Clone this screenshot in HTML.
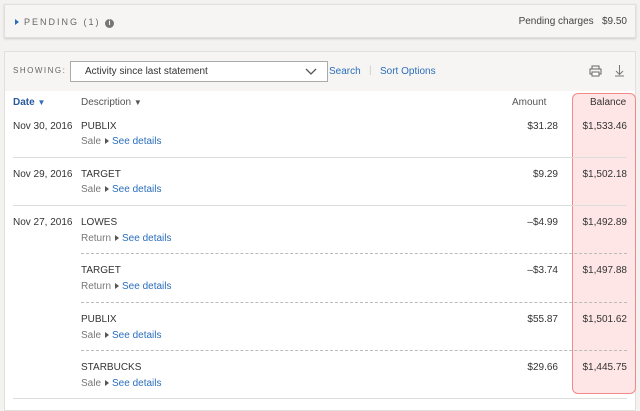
<!DOCTYPE html>
<html><head><style>
*{box-sizing:border-box;margin:0;padding:0}
body{width:640px;height:400px;background:#f3f2f0;font-family:"Liberation Sans",sans-serif;font-size:10px;color:#333;position:relative;overflow:hidden}
.pend{position:absolute;left:4px;top:4px;width:632px;height:34px;background:#f7f5f3;border:1px solid #e2e0dd;box-shadow:0 1px 2px #ccc}
.card{position:absolute;left:4px;top:51px;width:632px;height:360px;background:#fff;border:1px solid #e2e0dd}
.head{height:39px;background:#f7f5f3;position:relative}
.abs{position:absolute;white-space:nowrap}
.blue{color:#2a6ebb}
.hl{position:absolute;left:572px;top:93px;width:64px;height:301px;border:1px solid #f08a8a;border-radius:6px;background:rgba(255,200,200,.45)}
.sub{color:#777}
.tri{display:inline-block;width:0;height:0;border-left:4px solid #555;border-top:3px solid transparent;border-bottom:3px solid transparent;margin:0 3px 0 4px;vertical-align:0}
.line{position:absolute;height:0;border-top:1px solid #ddd}
.dash{position:absolute;height:0;border-top:1px dashed #bbb}
.r{text-align:right}
</style></head><body>
<div class="pend">
<span class="abs" style="left:10px;top:12px;font-size:9px;letter-spacing:2px;color:#666"><span style="display:inline-block;border-left:4px solid #2a6ebb;border-top:3px solid transparent;border-bottom:3px solid transparent;margin-right:5px"></span>PENDING (1) <span style="display:inline-block;width:9px;height:9px;border-radius:50%;background:#777;color:#fff;font-size:7px;text-align:center;line-height:9px;letter-spacing:0;font-weight:bold">i</span></span>
<span class="abs" style="right:8px;top:11px;font-size:10px;color:#444">Pending charges &nbsp; $9.50</span>
</div>
<div class="card">
<div class="head">
<span class="abs" style="left:8px;top:14px;font-size:8px;letter-spacing:1.5px;color:#666">SHOWING:</span>
<div class="abs" style="left:65px;top:9px;width:258px;height:21px;border:1px solid #aaa;background:#fff;padding:4px 0 0 14px;font-size:10px;color:#333">Activity since last statement
<svg style="position:absolute;right:10px;top:6px" width="12" height="8"><path d="M1 1 L6 6 L11 1" fill="none" stroke="#555" stroke-width="1.3"/></svg></div>
<span class="abs blue" style="left:324px;top:14px">Search</span>
<span class="abs" style="left:364px;top:13px;color:#ccc">|</span>
<span class="abs blue" style="left:375px;top:14px">Sort Options</span>
<svg class="abs" style="left:584px;top:13px" width="13" height="12"><rect x="3" y="1" width="7" height="3" fill="none" stroke="#666"/><rect x="1" y="4" width="11" height="5" fill="none" stroke="#666"/><rect x="3" y="7" width="7" height="4" fill="#fff" stroke="#666"/></svg>
<svg class="abs" style="left:609px;top:12px" width="11" height="13"><path d="M5.5 1 V10 M2 7 L5.5 10.5 L9 7 M1 12 H10" fill="none" stroke="#777"/></svg>
</div>
</div>
<div class="hl"></div>
<span class="abs blue" style="left:13px;top:97px;font-weight:bold;color:#2a5a9b">Date <span style="font-size:8px;color:#2a6ebb">▼</span></span>
<span class="abs" style="left:81px;top:97px;color:#555">Description <span style="font-size:8px">▼</span></span>
<span class="abs" style="left:512px;top:97px;color:#555">Amount</span>
<span class="abs" style="left:590px;top:97px;color:#333">Balance</span>

<span class="abs" style="left:13px;top:121px">Nov 30, 2016</span>
<span class="abs" style="left:81px;top:121px">PUBLIX</span>
<span class="abs sub" style="left:81px;top:136px">Sale<span class="tri"></span><span class="blue">See details</span></span>
<span class="abs r" style="right:82px;top:121px">$31.28</span>
<span class="abs r" style="right:13px;top:121px">$1,533.46</span>
<div class="line" style="left:13px;width:614px;top:157px"></div>
<span class="abs" style="left:13px;top:169px">Nov 29, 2016</span>
<span class="abs" style="left:81px;top:169px">TARGET</span>
<span class="abs sub" style="left:81px;top:184px">Sale<span class="tri"></span><span class="blue">See details</span></span>
<span class="abs r" style="right:82px;top:169px">$9.29</span>
<span class="abs r" style="right:13px;top:169px">$1,502.18</span>
<div class="line" style="left:13px;width:614px;top:205px"></div>
<span class="abs" style="left:13px;top:217px">Nov 27, 2016</span>
<span class="abs" style="left:81px;top:217px">LOWES</span>
<span class="abs sub" style="left:81px;top:233px">Return<span class="tri"></span><span class="blue">See details</span></span>
<span class="abs r" style="right:82px;top:217px">–$4.99</span>
<span class="abs r" style="right:13px;top:217px">$1,492.89</span>
<div class="dash" style="left:81px;width:546px;top:253px"></div>
<span class="abs" style="left:81px;top:265px">TARGET</span>
<span class="abs sub" style="left:81px;top:281px">Return<span class="tri"></span><span class="blue">See details</span></span>
<span class="abs r" style="right:82px;top:265px">–$3.74</span>
<span class="abs r" style="right:13px;top:265px">$1,497.88</span>
<div class="dash" style="left:81px;width:546px;top:302px"></div>
<span class="abs" style="left:81px;top:314px">PUBLIX</span>
<span class="abs sub" style="left:81px;top:330px">Sale<span class="tri"></span><span class="blue">See details</span></span>
<span class="abs r" style="right:82px;top:314px">$55.87</span>
<span class="abs r" style="right:13px;top:314px">$1,501.62</span>
<div class="dash" style="left:81px;width:546px;top:350px"></div>
<span class="abs" style="left:81px;top:362px">STARBUCKS</span>
<span class="abs sub" style="left:81px;top:378px">Sale<span class="tri"></span><span class="blue">See details</span></span>
<span class="abs r" style="right:82px;top:362px">$29.66</span>
<span class="abs r" style="right:13px;top:362px">$1,445.75</span>
<div class="line" style="left:13px;width:614px;top:398px"></div>
</body></html>
